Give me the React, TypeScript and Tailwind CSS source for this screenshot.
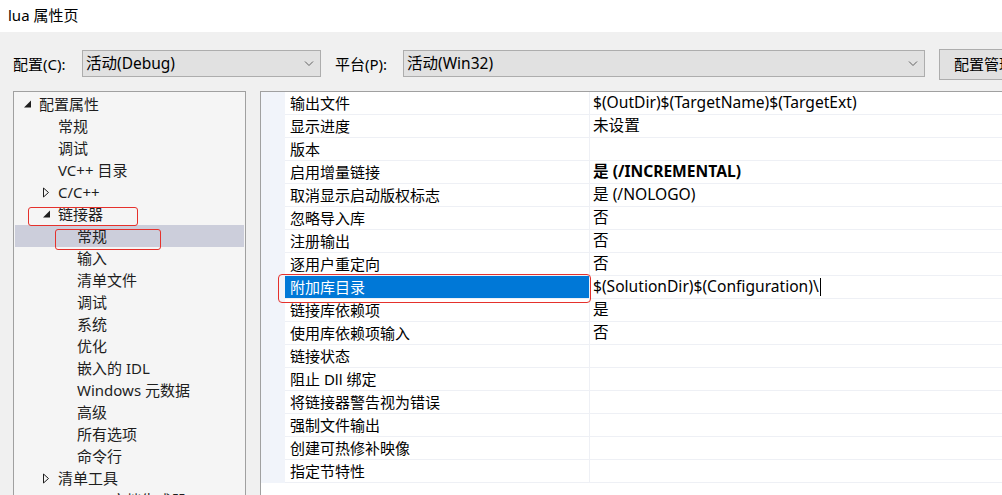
import React from "react";

/* VS property page: Linker > General, with two red annotation boxes. */

const FONT = '"Noto Sans", "Noto Sans CJK SC", sans-serif';

type TreeItem = {
  label: string;
  level: number;
  exp?: "open" | "closed";
  selected?: boolean;
};

const tree: TreeItem[] = [
  { label: "配置属性", level: 0, exp: "open" },
  { label: "常规", level: 1 },
  { label: "调试", level: 1 },
  { label: "VC++ 目录", level: 1 },
  { label: "C/C++", level: 1, exp: "closed" },
  { label: "链接器", level: 1, exp: "open" },
  { label: "常规", level: 2, selected: true },
  { label: "输入", level: 2 },
  { label: "清单文件", level: 2 },
  { label: "调试", level: 2 },
  { label: "系统", level: 2 },
  { label: "优化", level: 2 },
  { label: "嵌入的 IDL", level: 2 },
  { label: "Windows 元数据", level: 2 },
  { label: "高级", level: 2 },
  { label: "所有选项", level: 2 },
  { label: "命令行", level: 2 },
  { label: "清单工具", level: 1, exp: "closed" },
  { label: "XML 文档生成器", level: 2 },
];

type Prop = { name: string; value: string; bold?: boolean; selected?: boolean };

const props: Prop[] = [
  { name: "输出文件", value: "$(OutDir)$(TargetName)$(TargetExt)" },
  { name: "显示进度", value: "未设置" },
  { name: "版本", value: "" },
  { name: "启用增量链接", value: "是 (/INCREMENTAL)", bold: true },
  { name: "取消显示启动版权标志", value: "是 (/NOLOGO)" },
  { name: "忽略导入库", value: "否" },
  { name: "注册输出", value: "否" },
  { name: "逐用户重定向", value: "否" },
  { name: "附加库目录", value: "$(SolutionDir)$(Configuration)\\", selected: true },
  { name: "链接库依赖项", value: "是" },
  { name: "使用库依赖项输入", value: "否" },
  { name: "链接状态", value: "" },
  { name: "阻止 Dll 绑定", value: "" },
  { name: "将链接器警告视为错误", value: "" },
  { name: "强制文件输出", value: "" },
  { name: "创建可热修补映像", value: "" },
  { name: "指定节特性", value: "" },
];

function Chevron() {
  return (
    <svg width="10" height="6" viewBox="0 0 10 6" className="shrink-0">
      <path d="M1 0.5 L5 4.5 L9 0.5" fill="none" stroke="#606060" strokeWidth="1" />
    </svg>
  );
}

function Toggle({ exp }: { exp?: "open" | "closed" }) {
  if (exp === "open")
    return (
      <svg width="9" height="8" viewBox="0 0 9 8">
        <path d="M8 0.5 L8 7.5 L1 7.5 Z" fill="#1e1e1e" />
      </svg>
    );
  if (exp === "closed")
    return (
      <svg width="8" height="11" viewBox="0 0 8 11">
        <path d="M1.5 1 L6.5 5.5 L1.5 10 Z" fill="none" stroke="#1e1e1e" strokeWidth="1" />
      </svg>
    );
  return null;
}

function Select({ value, w }: { value: string; w: string }) {
  return (
    <div
      className={`${w} mt-px flex h-[27px] shrink-0 items-center justify-between border border-[#adadad] bg-[#e1e1e1] pl-[3px] pr-[6px] text-[15px] text-black`}
    >
      <span className="text-[15.5px]">{value}</span>
      <Chevron />
    </div>
  );
}

export default function App() {
  return (
    <div
      className="flex h-[495px] w-[1002px] flex-col overflow-hidden bg-[#f0f0f0] text-black"
      style={{ fontFamily: FONT }}
    >
      {/* title */}
      <div className="flex h-8 shrink-0 items-center bg-white pb-[2px] pl-2 text-[15px]">lua 属性页</div>

      {/* config row */}
      <div className="mt-[17px] flex h-[31px] shrink-0 items-start pl-[13px] text-[15px] whitespace-nowrap">
        <span className="mt-[4px] w-[69px] shrink-0">配置(C):</span>
        <Select value="活动(Debug)" w="w-[239px]" />
        <span className="ml-[14px] mt-[4px] w-[68px] shrink-0">平台(P):</span>
        <Select value="活动(Win32)" w="w-[522px]" />
        <div className="ml-[14px] flex h-[31px] w-[130px] shrink-0 items-center border border-[#adadad] bg-[#e1e1e1] pl-[14px]">
          配置管理器...
        </div>
      </div>

      {/* body */}
      <div className="mt-[11px] flex min-h-0 flex-1 pl-[13px]">
        {/* tree */}
        <div className="relative w-[233px] shrink-0 border border-b-0 border-[#a0a0a0] bg-[#f5f5f5] pt-px text-[15px] text-[#1e1e1e]">
          {tree.map((t, i) => (
            <div
              key={i}
              className={`mx-px flex h-[22px] items-center whitespace-nowrap ${t.selected ? "bg-[#cccedb]" : ""}`}
              style={{ paddingLeft: 7 + t.level * 19 }}
            >
              <span className="flex w-[17px] shrink-0 items-center pl-[1px]">
                <Toggle exp={t.exp} />
              </span>
              <span className="leading-none">{t.label}</span>
            </div>
          ))}
          {/* annotation boxes */}
          <div className="absolute left-[14px] top-[115px] h-[19px] w-[110px] rounded-[3px] border border-[#e5312c]" />
          <div className="absolute left-[41px] top-[137px] h-[21px] w-[106px] rounded-[3px] border border-[#e5312c]" />
        </div>

        {/* property grid */}
        <div className="relative ml-[14px] flex min-w-0 flex-1 flex-col border-l border-t border-[#a0a0a0] bg-white text-[15px]">
          <div className="flex">
            <div className="w-[24px] shrink-0 bg-[#f1f4fa]" />
            <div className="flex-1">
              {props.map((p, i) => (
                <div key={i} className="flex h-[23px] border-b border-[#eef0f5]">
                  <div
                    className={`flex w-[305px] shrink-0 items-center border-r border-[#eef0f5] pl-[5px] whitespace-nowrap ${
                      p.selected ? "bg-[#0078d7] text-white" : ""
                    }`}
                  >
                    {p.name}
                  </div>
                  <div
                    className={`flex items-center pl-[3px] text-[15.6px] whitespace-nowrap ${p.bold ? "font-bold" : ""}`}
                  >
                    {p.value}
                    {p.selected && <span className="ml-px inline-block h-[18px] w-px bg-black" />}
                  </div>
                </div>
              ))}
            </div>
          </div>
          <div className="absolute left-[17px] top-[182px] h-[29px] w-[313px] rounded-[4px] border border-[#e5312c]" />
        </div>
      </div>
    </div>
  );
}
